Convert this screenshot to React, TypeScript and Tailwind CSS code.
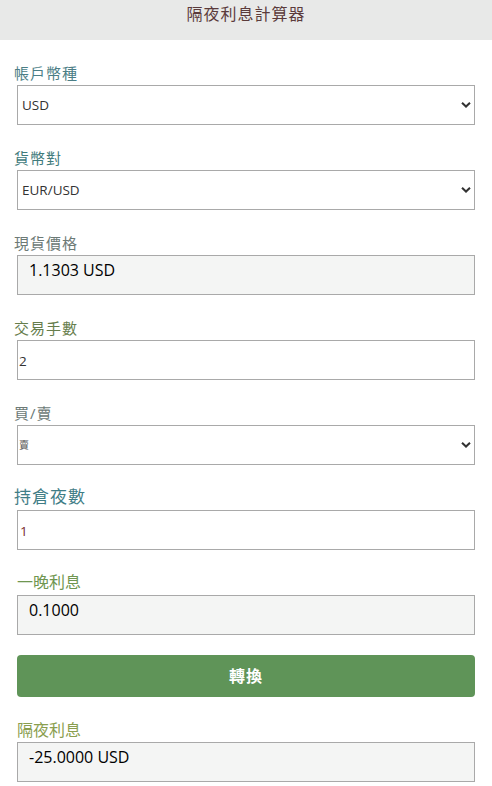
import { useState } from "react";

const font = "font-['Open_Sans','Noto_Sans_CJK_TC',sans-serif]";

const Chevron = () => (
  <svg
    className="pointer-events-none absolute right-[4px] top-1/2 -translate-y-1/2"
    width="10"
    height="7"
    viewBox="0 0 10 7"
  >
    <path d="M1 1.2 L5 5 L9 1.2" fill="none" stroke="#333" strokeWidth="2" />
  </svg>
);

const Label = ({ text, className }: { text: string; className: string }) => (
  <div className={`h-[20px] leading-[20px] whitespace-nowrap ${className}`}>{text}</div>
);

const SelectField = ({
  value,
  options,
  onChange,
  textClass,
}: {
  value: string;
  options: string[];
  onChange: (v: string) => void;
  textClass: string;
}) => (
  <div className="relative ml-[3px] h-[40px]">
    <select
      value={value}
      onChange={(e) => onChange(e.target.value)}
      className={`h-full w-full appearance-none border border-[#a9a9a9] bg-white outline-none ${textClass}`}
    >
      {options.map((o) => (
        <option key={o} value={o}>
          {o}
        </option>
      ))}
    </select>
    <Chevron />
  </div>
);

const ReadBox = ({ value }: { value: string }) => (
  <div className="ml-[3px] h-[40px] border border-[#a9a9a9] bg-[#f4f5f4] pl-[11px] pt-[2px] text-[16px] leading-[24px] text-black">
    {value}
  </div>
);

export default function App() {
  const [account, setAccount] = useState("USD");
  const [pair, setPair] = useState("EUR/USD");
  const [lots, setLots] = useState("2");
  const [side, setSide] = useState("賣");
  const [nights, setNights] = useState("1");

  return (
    <div className={`min-h-screen bg-white ${font}`}>
      {/* HEADER */}
      <div className="flex h-[40px] items-start justify-center bg-[#e8e9e8] pt-[3px] text-[16px] leading-[22px] tracking-[1px] text-[#5b3b3b]">
        隔夜利息計算器
      </div>

      <div className="pl-[14px] pr-[17px] pb-[4px]">
        <div className="pt-[23px]">
          <Label text="帳戶幣種" className="mb-[2px] text-[15px] tracking-[1px] text-[#4b7e86]" />
          <SelectField
            value={account}
            options={["USD", "HKD", "EUR"]}
            onChange={setAccount}
            textClass="pl-[4px] text-[13.5px] text-[#333]"
          />
        </div>

        <div className="pt-[23px]">
          <Label text="貨幣對" className="mb-[2px] text-[15px] tracking-[1px] text-[#3f7b7c]" />
          <SelectField
            value={pair}
            options={["EUR/USD", "GBP/USD", "USD/JPY"]}
            onChange={setPair}
            textClass="pl-[4px] text-[13.5px] text-[#333]"
          />
        </div>

        <div className="pt-[23px]">
          <Label text="現貨價格" className="mb-[2px] text-[15px] tracking-[1px] text-[#6c7a76]" />
          <ReadBox value="1.1303 USD" />
        </div>

        <div className="pt-[23px]">
          <Label text="交易手數" className="mb-[2px] text-[15px] tracking-[1px] text-[#667d4c]" />
          <input
            value={lots}
            onChange={(e) => setLots(e.target.value)}
            className="ml-[3px] block h-[40px] w-[calc(100%-3px)] border border-[#a9a9a9] bg-white pl-[1px] pt-[2px] text-[13.5px] text-[#333] outline-none"
          />
        </div>

        <div className="pt-[23px]">
          <Label text="買/賣" className="mb-[2px] text-[15px] tracking-[1px] text-[#6c7a76]" />
          <SelectField
            value={side}
            options={["買", "賣"]}
            onChange={setSide}
            textClass="pl-[1px] text-[10px] text-[#555]"
          />
        </div>

        <div className="pt-[22px]">
          <Label text="持倉夜數" className="mb-[3px] text-[17px] tracking-[1px] text-[#3f7d86]" />
          <input
            value={nights}
            onChange={(e) => setNights(e.target.value)}
            className="ml-[3px] block h-[40px] w-[calc(100%-3px)] border border-[#a9a9a9] bg-white pl-[2px] pt-[2px] text-[13.5px] text-[#7a2c2c] outline-none"
          />
        </div>

        <div className="pt-[22px]">
          <Label text="一晚利息" className="mb-[3px] ml-[3px] text-[16px] text-[#6f9650]" />
          <ReadBox value="0.1000" />
        </div>

        <button className="ml-[3px] mt-[20px] flex h-[42px] w-[calc(100%-3px)] items-center justify-center rounded-[4px] bg-[#5f9458] text-[16px] font-bold tracking-[1px] text-white">
          轉換
        </button>

        <div className="pt-[23px]">
          <Label text="隔夜利息" className="mb-[2px] ml-[3px] text-[16px] text-[#8a9e4e]" />
          <ReadBox value="-25.0000 USD" />
        </div>
      </div>
    </div>
  );
}
